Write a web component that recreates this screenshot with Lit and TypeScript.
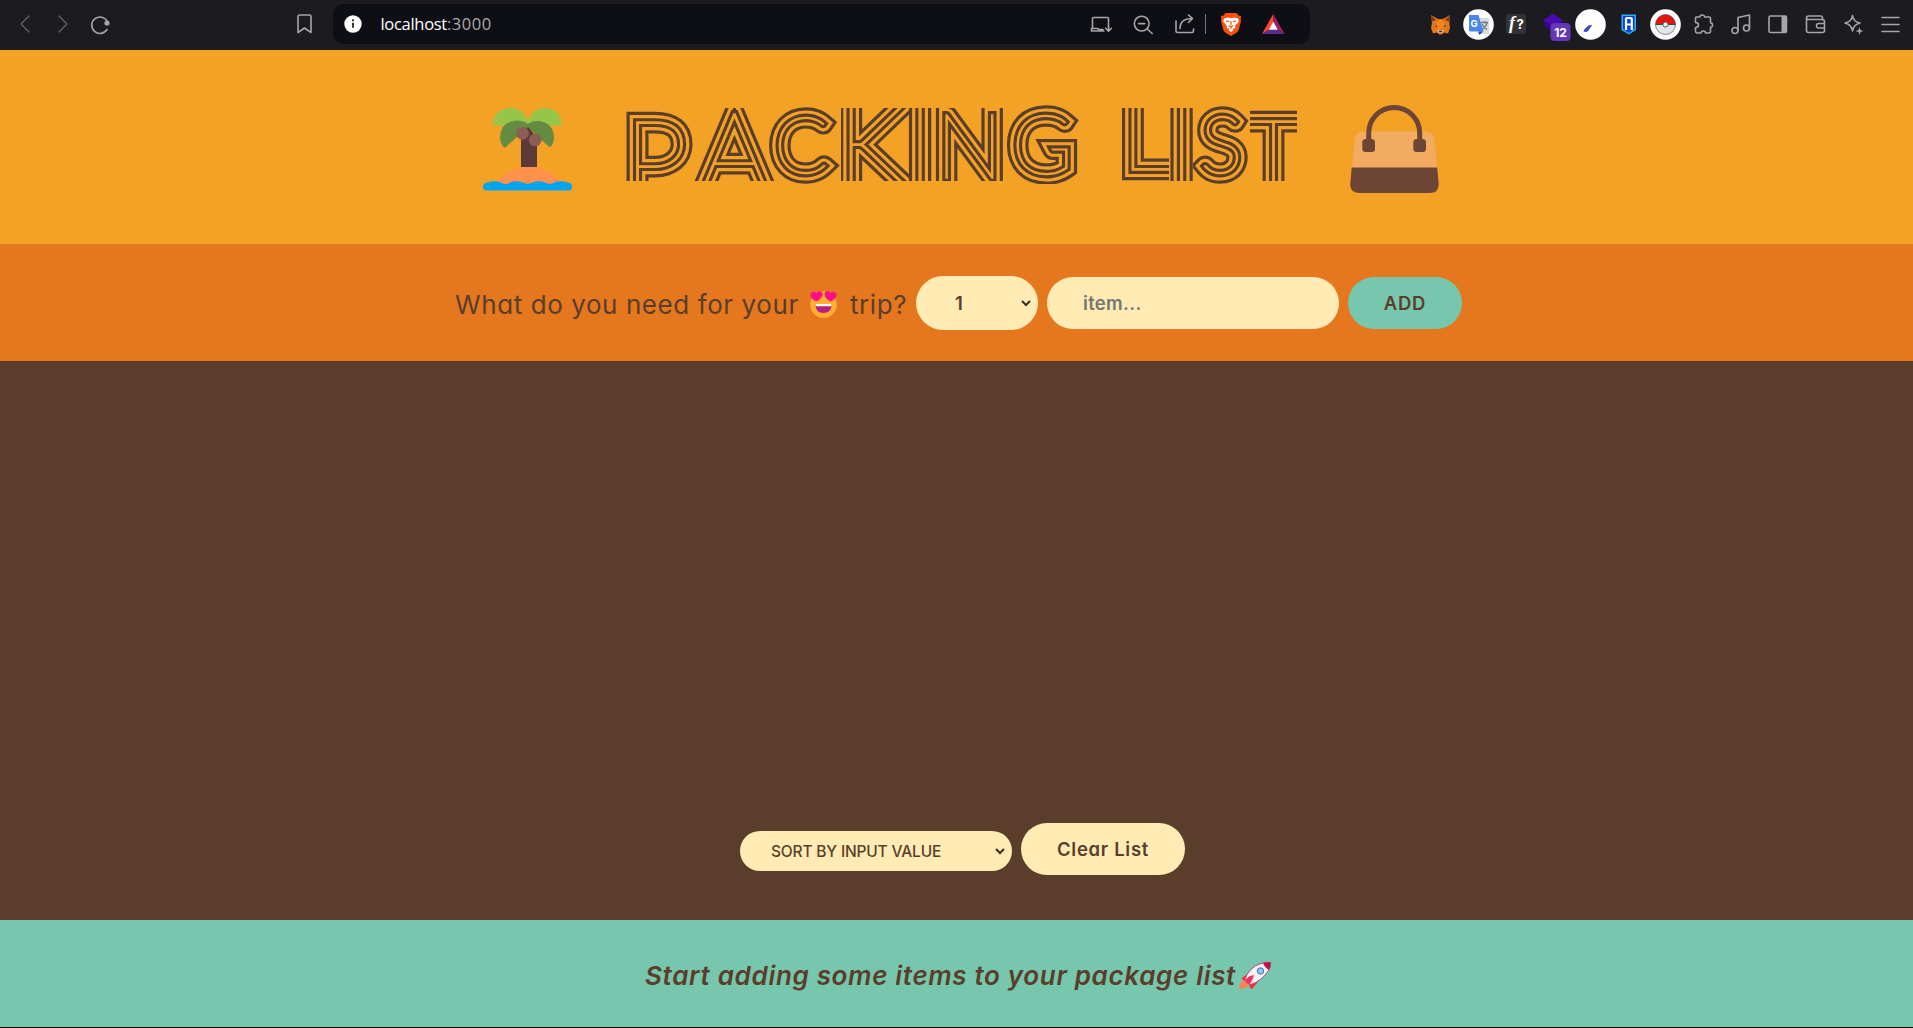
import { LitElement, html, svg, css } from "lit";
import { customElement } from "lit/decorators.js";

// Each title letter: glyph, window (x, width), window top/bottom, glyph start (or centre), baseline, size.
interface Letter { ch: string; x: number; w: number; t: number; b: number; gx: number; y: number; fs: number; mid?: boolean }
const LETTERS: Letter[] = [
  { ch: "P", x: 625, w: 70, t: 108, b: 181, gx: 623.5, y: 202, fs: 115 },
  { ch: "A", x: 692, w: 84, t: 108, b: 181, gx: 734.5, y: 190, fs: 109, mid: true },
  { ch: "C", x: 769, w: 73, t: 105, b: 184, gx: 774, y: 173, fs: 79 },
  { ch: "K", x: 841, w: 68, t: 108, b: 181, gx: 836, y: 189, fs: 124 },
  { ch: "I", x: 908, w: 24, t: 108, b: 181, gx: 920, y: 194, fs: 140, mid: true },
  { ch: "N", x: 933, w: 73, t: 108, b: 181, gx: 969.5, y: 178, fs: 90, mid: true },
  { ch: "G", x: 1006, w: 76, t: 105, b: 184, gx: 1011.5, y: 174, fs: 83 },
  { ch: " ", x: 1083, w: 30, t: 108, b: 181, gx: 1083, y: 172, fs: 79 },
  { ch: "L", x: 1121, w: 48, t: 108, b: 181, gx: 1120, y: 170, fs: 106 },
  { ch: "I", x: 1170, w: 23, t: 108, b: 181, gx: 1181.5, y: 194, fs: 140, mid: true },
  { ch: "S", x: 1193, w: 57, t: 105, b: 184, gx: 1221.5, y: 173, fs: 80, mid: true },
  { ch: "T", x: 1250, w: 47, t: 108, b: 181, gx: 1273.5, y: 196, fs: 106, mid: true },
];

const cell = (box: string, w: number, h: number, body: unknown) =>
  html`<span class="cell"><svg viewBox=${box} width=${w} height=${h}>${body}</svg></span>`;

@customElement("app-root")
export class AppRoot extends LitElement {
  static styles = css`
    :host { display: block; height: 1028px; width: 100%; overflow: hidden; background: #000;
      font-family: Inter, "Open Sans", sans-serif; font-feature-settings: "cv11"; color: #5a3e2b; }
    * { box-sizing: border-box; }
    svg { display: block; flex: none; overflow: visible; }
    .bar { height: 50px; background: #1c1b20; display: flex; align-items: center; padding: 0 3.5px 2px 6.5px; }
    .cell { width: 37.5px; display: flex; justify-content: center; align-items: center; flex: none; }
    .line { fill: none; stroke: #a6a5aa; stroke-width: 1.6; stroke-linecap: round; stroke-linejoin: round; }
    .dim { stroke: #5b5a5f; }
    .mark { margin: 0 9.5px 0 167px; }
    .url { width: 977px; height: 40px; border-radius: 10px; background: #0e0f14; display: flex; align-items: center;
      padding: 0 16px 0 11px; font: 16.5px "Open Sans", "Noto Sans", sans-serif; color: #fff; margin-right: auto; }
    .addr { margin: -2px auto 0 18.5px; letter-spacing: -0.3px; }
    .port { color: #a9a9ad; letter-spacing: 0.55px; }
    .tools { display: flex; align-items: center; }
    .tools .cell { width: 42px; }
    .sep { width: 1.5px; height: 20px; background: #77777b; margin: 0 4px 0 -1px; }
    .exts { display: flex; align-items: center; }
    .hero { height: 194px; background: #f4a226; display: flex; align-items: flex-start; justify-content: center; gap: 53px; padding: 55px 0 0 8px; }
    .title { font-family: Lato, Inter, sans-serif; font-weight: 100; }
    .title svg { overflow: hidden; }
    .title > svg { overflow: visible; }
    .mid { text-anchor: middle; }
    .s1 { fill: #5a3e2b; stroke: #5a3e2b; stroke-width: 20.6px; }
    .s2 { fill: #f4a226; stroke: #f4a226; stroke-width: 14.2px; }
    .s3 { fill: #5a3e2b; stroke: #5a3e2b; stroke-width: 7.8px; }
    .s4 { fill: #f4a226; stroke: #f4a226; stroke-width: 1.5px; }
    .ask { height: 117px; background: #e5771f; display: flex; align-items: center; justify-content: flex-start; padding: 1px 0 0 455px; }
    .q { display: flex; align-items: center; width: 461px; font-size: 26px; white-space: nowrap; font-weight: 400; padding-top: 2px; letter-spacing: 0.58px; }
    .q1 { width: 355px; }
    .q2 { margin-left: 13px; }
    .pill { border: 0; border-radius: 60px; background: #ffebb3; height: 52px; display: flex; align-items: center; font-size: 18.5px; font-weight: 600; white-space: nowrap; }
    .qty { width: 122px; height: 54px; padding: 0 7px 0 39px; justify-content: space-between; }
    .item { width: 292px; margin-left: 9px; padding-left: 36px; color: #757575; letter-spacing: 0.3px; }
    .add { width: 114px; margin-left: 9px; background: #76c7ad; justify-content: center; letter-spacing: 0.8px; }
    .list { height: 559px; background: #5a3e2b; display: flex; justify-content: center; align-items: flex-end; gap: 9px; padding: 0 0 45px 12px; }
    .sort { width: 272px; height: 40px; font-size: 15.5px; font-weight: 500; padding: 0 7px 0 31px; justify-content: space-between; margin-bottom: 4px; letter-spacing: -0.17px; }
    .clear { width: 164px; justify-content: center; letter-spacing: 0.7px; }
    .foot { height: 107px; background: #76c7ad; display: flex; align-items: center; justify-content: flex-start; padding: 3px 0 0 645px; font-size: 26px; font-style: italic; font-weight: 600; white-space: nowrap; }
    .msg { width: 594px; letter-spacing: 0.67px; }
  `;

  private chevron() {
    return html`<svg viewBox="0 0 10 6" width="10" height="6"><path d="M1 1l4 4 4-4" fill="none" stroke="#3f2b1e" stroke-width="2"/></svg>`;
  }

  private toolbar() {
    return html`<div class="bar">
      ${cell("0 0 10 18", 10, 18, svg`<path class="line dim" d="M9 1L1 9l8 8"/>`)}
      ${cell("0 0 10 18", 10, 18, svg`<path class="line dim" d="M1 1l8 8-8 8"/>`)}
      ${cell("91 14 19 19", 19, 19, svg`<path class="line" d="M107.3 20.5A8.2 8.2 0 1 0 107 28.5"/><circle cx="107" cy="22" r="2.6" fill="#a6a5aa"/>`)}
      <span class="cell mark"><svg viewBox="297 14 15 20" width="15" height="20"><path class="line" d="M298 32.500V16.500q0-1.500 1.500-1.500h10q1.500 0 1.500 1.500v16l-6.500-4.500z"/></svg></span>
      <div class="url">
        <svg viewBox="0 0 18 18" width="18" height="18"><circle cx="9" cy="9" r="8.700" fill="#fff"/><path d="M9 7.800v5" stroke="#222" stroke-width="1.800"/><circle cx="9" cy="5.300" r="1.100" fill="#222"/></svg>
        <span class="addr">localhost<span class="port">:3000</span></span>
        <div class="tools">
          ${cell("1090 14 22 20", 22, 20, svg`<path class="line" d="M1108.500 22v-3.500q0-1-1-1h-14q-1 0-1 1V28M1091.500 31h12.500M1091.500 28.500h6l1.500 1h4M1091.500 28.500V31M1108.500 23v8M1105.700 28.300l2.800 2.800 2.800-2.800"/>`)}
          ${cell("1133 14 20 19", 20, 19, svg`<circle class="line" cx="1141.700" cy="22.600" r="7.400"/><path class="line" d="M1147.200 28l5 4.500M1138.700 22.600h6"/>`)}
          ${cell("1176 14 20 20", 20, 20, svg`<path class="line" d="M1177 21v10q0 1.500 1.500 1.500h14.500q1.500 0 1.500-1.500v-2M1181 28.500q0-10 12.500-10M1189.500 15l4 3.500-4 4"/>`)}
          <span class="sep"></span>
          ${cell("1221 13 20 23", 20, 23, svg`<path fill="#fb4f0c" d="M1225.500 13h11l2 2.500 2.500.5-.3 3 .3 2-2.500 9.500q-1 2-7.500 5.500-6.500-3.500-7.500-5.500L1221 21l.3-2-.3-3 2.500-.5z"/><path fill="#fff" d="M1224 18.500l4-1 3 .8 3-.8 4 1 .8 3-3.800 4.500.5 2-3 1 1 1.200-2.500 1.800-2.500-1.800 1-1.200-3-1 .5-2-3.800-4.500z"/><path fill="none" stroke="#fb4f0c" stroke-width="1.200" d="M1226 21l3 .7M1236 21l-3 .7M1231 21v4M1228.700 25.500l2.300 1.300 2.300-1.300M1231 27v2"/>`)}
          ${cell("1262 14 23 20", 23, 20, svg`<path fill="#ff4b2b" d="M1273.300 14v8l-4 7.500-7.300 4.500z"/><path fill="#9e1f63" d="M1273.300 14l11.200 20-7.300-4.500-3.900-7.500z"/><path fill="#5b2d90" d="M1262 34h22.500l-7.300-4.500h-8z"/><path fill="#fff" d="M1273.300 21.500l4.400 8.300h-8.800z"/>`)}
        </div>
      </div>
      <div class="exts">
        ${cell("1431 15 20 19", 20, 19, svg`<path fill="#e2761b" d="M1431 15l7 4h5l7-4-.7 8 .7 5-2 5.500-4-1-2 2h-3l-2-2-4 1-2-5.500 1-5z"/><path fill="#763d16" d="M1431 15l5 5-4 1.500zM1450 15l-5 5 4 1.500z"/><path fill="#f6851b" d="M1436 22l4.500-2 4.500 2-1.500 7h-6z"/><path fill="#d7c1b3" d="M1437 29.500l3.500 1.500 3.500-1.500-1.500 3.500h-4z"/><path fill="#233447" d="M1435.500 25l2.500 1.500h-2.500zM1445.500 25l-2.500 1.500h2.500zM1439 31h3v1.300h-3z"/>`)}
        ${cell("1463 9 31 31", 31, 31, svg`<circle cx="1478.500" cy="24.500" r="15.300" fill="#fff"/><path fill="#d9dcdf" d="M1477 18h12v16h-9z"/><path stroke="#6d7c86" stroke-width="1.300" fill="none" d="M1481 22.500h7M1484.500 21v1.500M1487 23q-1 4-5 6.500M1482 24q1.500 3.500 5 5.500"/><path fill="#4a86ee" d="M1469 15h9.500l5 16.500h-13q-1.500 0-1.500-1.500z"/><path fill="#2447ba" d="M1478 31.500h5l-3.500 3.500z"/><text x="1470.500" y="26.500" font-size="9.500" font-weight="700" fill="#fff">G</text>`)}
        ${cell("1506 15 20 20", 20, 20, svg`<rect x="1506" y="15" width="20" height="20" rx="3" fill="#333335"/><text x="1509" y="30" font-size="18" font-family="Liberation Serif" font-style="italic" font-weight="700" fill="#fff">f</text><text x="1516.500" y="29.500" font-size="13" font-weight="700" fill="#fff">?</text>`)}
        ${cell("1535.500 10 37 31", 37, 31, svg`<path fill="#4a0bb0" d="M1543.500 21.500l10-7 10 7-10 7z"/><path fill="#32088a" d="M1543.500 25.500l4-2.500 6 4.500 4-2 4 3-8 4.500z"/><rect x="1551" y="24" width="20" height="18" rx="4" fill="#6437b8"/><text x="1561" y="37.500" font-size="12" font-weight="700" text-anchor="middle" fill="#fff">12</text>`)}
        ${cell("1575 9 31 31", 31, 31, svg`<circle cx="1590.500" cy="24.500" r="15.300" fill="#fff"/><path fill="#3548bf" d="M1583.500 31.500q.2-2 2-3.300l3-2.700q3-.8 3.500-.2L1588 31q-2 1.500-4.500.5z"/>`)}
        ${cell("1621 14 15 21", 15, 21, svg`<path fill="#23b5f5" d="M1621.500 14.500h14.500V30l-7.200 4.500-7.300-4.500z"/><path fill="#0b3fe0" d="M1623 16h11.500v13l-5.700 4-5.800-4z"/><path fill="none" stroke="#fff" stroke-width="2.200" d="M1626 30v-11q0-1 1-1h3.500q1.300 0 1.300 1v11M1626 24.500h5.500"/>`)}
        ${cell("1650 9 31 31", 31, 31, svg`<circle cx="1665.500" cy="24.500" r="15.300" fill="#fff"/><path fill="#e2150f" d="M1655.500 24.500a10 10 0 0 1 20 0z"/><path fill="#dce8ea" d="M1655.500 24.500a10 10 0 0 0 20 0z"/><circle cx="1665.500" cy="24.500" r="10" fill="none" stroke="#555" stroke-width=".700"/><path stroke="#444" d="M1655.500 24.500h20"/><circle cx="1665.500" cy="24.500" r="2.600" fill="#eee" stroke="#555"/>`)}
        ${cell("1693 14 20 21", 20, 21, svg`<path class="line" d="M1696 17h4q-.3-2 2.200-2t2.300 2h4.500q1.500 0 1.500 1.500v4.500q2-.3 2 2t-2 2.200V31q0 2-2 2h-3q0-2-2.200-2t-2.300 2h-3.500q-2 0-2-2v-3.500q3 0 3-2.500t-3-2.500v-4q0-1.500.5-1.500z"/>`)}
        ${cell("1731 15 20 20", 20, 20, svg`<path class="line" d="M1738 31.500V18.500l11.500-2.500v13"/><circle class="line" cx="1735" cy="31.500" r="3"/><circle class="line" cx="1746.500" cy="29" r="3"/>`)}
        ${cell("1768 15 20 18", 20, 18, svg`<rect class="line" x="1769" y="16" width="17.500" height="16.500" rx="1.500"/><path fill="#a6a5aa" d="M1781.500 16h5.500v16.500h-5.500z"/>`)}
        ${cell("1805 15 21 18", 21, 18, svg`<path class="line" d="M1822.500 19.500v-1.500q0-2-2-2h-12q-2 0-2 2v12.500q0 2 2 2h14q2 0 2-2V22q0-2.500-2-2.500h-14q-2 0-2-1.500M1824.500 23.500h-6q-2 0-2 2.300t2 2.200h6"/>`)}
        ${cell("1844 14 19 20", 19, 20, svg`<path class="line" d="M1852.500 15.500q1 6.500 7.500 7.500-6.500 1.500-7.500 8-1-6.500-7.500-8 6.500-1 7.500-7.500z"/><path fill="#a6a5aa" d="M1859.500 27l1 3 3 1-3 1-1 3-1-3-3-1 3-1z"/>`)}
        ${cell("0 0 19 15", 19, 15, svg`<path class="line" d="M1 .500h17M1 7.500h17M1 14.500h17"/>`)}
      </div>
    </div>`;
  }

  private title() {
    return html`<div class="title"><svg viewBox="625 105 672 79" width="672" height="79" role="img" aria-label="PACKING LIST">
      ${LETTERS.map((l, i) => svg`<svg x=${l.x} y=${l.t} width=${l.w} height=${l.b - l.t} viewBox="${l.x} ${l.t} ${l.w} ${l.b - l.t}"><g class="s1"><text id="g${i}" class=${l.mid ? "mid" : ""} x=${l.gx} y=${l.y} font-size=${l.fs}>${l.ch}</text></g><use class="s2" href="#g${i}"/><use class="s3" href="#g${i}"/><use class="s4" href="#g${i}"/></svg>`)}
    </svg></div>`;
  }

  private palm() {
    return html`<svg viewBox="483 105 89 88" width="89" height="88">
      <path fill="#ff914d" d="M494 187q13-20.500 34.500-20.500T564 187z"/>
      <path fill="#5d3a38" d="M521 167v-33l7-8 9 12v29z"/>
      <path fill="#97c54a" d="M494 125.500q-1.500 0-1-2.500 2-14.500 17-15 14 0 18 14 4-14 17-14 15 1 16.500 15 .2 2.500-1 2.500z"/>
      <path fill="#648b42" d="M528 124q4-3 10-3 15 1 16 16 0 6-3 9.500-2 1-4-1.500L528 127l-20 18q-2.500 3-4 2.500-4-4-4-11 1-15 17-16 6 0 11 3.500z"/>
      <circle cx="522.500" cy="133.300" r="6.400" fill="#8c5d57"/><circle cx="535.200" cy="140" r="6.300" fill="#8c5d57"/>
      <path fill="#00a5ef" d="M487 182.500q7.500-2.500 14 0 5.500 3 9 0 7-2.500 13 0 5 2.500 9.500 0 6.500-2.500 12.500 0 5 2.500 9 0 6.500-2.500 14 0 4 .5 4 4.500t-4 3.500H487q-4 0-4-3.500t4-4.500z"/>
    </svg>`;
  }

  private bag() {
    return html`<svg viewBox="1350 105 89 88" width="89" height="88">
      <path fill="#f2ab61" d="M1354.500 141q.8-9.500 9-9.500h62q8 0 9 9.500l2.500 27h-85z"/>
      <path fill="#6d4534" d="M1351.700 167.500h85.500l1.500 17q0 8.500-9 8.500h-70q-9.500 0-9.500-8.500z"/>
      <path fill="none" stroke="#6d4534" stroke-width="5" d="M1368.700 143v-10a25.500 25.500 0 0 1 51 0v10"/>
      <rect x="1362.300" y="139" width="12.700" height="13" rx="3.500" fill="#6d4534"/><rect x="1413.300" y="139" width="12.700" height="13" rx="3.500" fill="#6d4534"/>
    </svg>`;
  }

  render() {
    return html`
      ${this.toolbar()}
      <div class="hero">${this.palm()}${this.title()}${this.bag()}</div>
      <div class="ask">
        <div class="q"><span class="q1">What do you need for your</span>
          <svg viewBox="0 0 27 27" width="27" height="27"><circle cx="13.500" cy="13.500" r="13.300" fill="#ffb02e"/><path fill="#ff0f86" d="M6 10.500q-6-3.500-5.700-7Q1 .500 4 .800q2 .2 2.700 1.500Q8-.500 10.500.200q2.700 1 1.800 4.300Q11 8.500 6 10.500zM21 10.500q6-3.500 5.700-7Q26 .500 23 .800q-2 .2-2.700 1.500Q19-.500 16.500.200q-2.700 1-1.800 4.300Q16 8.500 21 10.500z"/><path fill="#bb1d80" d="M5.500 13.500h16q0 8.500-8 8.500t-8-8.500z"/><path fill="#fff" d="M5.500 13h16q0 2.300-1 2.300h-14q-1 0-1-2.300z"/></svg>
          <span class="q2">trip?</span></div>
        <div class="pill qty"><span>1</span>${this.chevron()}</div>
        <div class="pill item">item...</div>
        <div class="pill add">ADD</div>
      </div>
      <div class="list">
        <div class="pill sort"><span>SORT BY INPUT VALUE</span>${this.chevron()}</div>
        <div class="pill clear">Clear List</div>
      </div>
      <div class="foot"><span class="msg">Start adding some items to your package list</span>
        <svg viewBox="0 0 32 27" width="32" height="27"><path fill="#ff8257" d="M3 19l4-1 3 4q-1 3-4 4l-6 1q0-5 3-8z"/><path fill="#f8312f" d="M10 11l-7 5q0 2 3 2.500zM19 20l-6 7q-2 0-2.500-4z"/><path fill="#f4f0f6" stroke="#a82b5c" stroke-width=".800" d="M5.500 18Q10 5 22 1.500q5-1.500 9.500-1 .3 4-2 8Q23 19 10.500 23z"/><path fill="#ca0b4a" d="M24 1q4-1 7.600-.6.400 4-1.600 7.600Q26 6 24 1z"/><path fill="#f92f60" d="M5.500 18L11 14l4-1-1.500 4.500L10.500 23z"/><circle cx="21.500" cy="9" r="3.200" fill="#83cbff" stroke="#46638e" stroke-width=".900"/></svg>
      </div>`;
  }
}
